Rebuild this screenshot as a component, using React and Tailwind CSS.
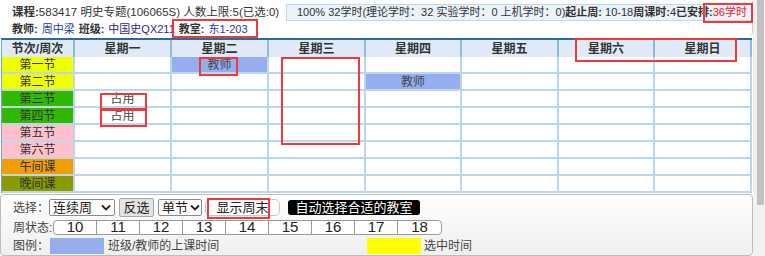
const FONT = { fontFamily: '"Liberation Sans", "Noto Sans CJK SC", sans-serif' };

const days = ["星期一", "星期二", "星期三", "星期四", "星期五", "星期六", "星期日"];

const periods = [
  { name: "第一节", bg: "bg-[#eeff00]" },
  { name: "第二节", bg: "bg-[#eeff00]" },
  { name: "第三节", bg: "bg-[#31b800]" },
  { name: "第四节", bg: "bg-[#31b800]" },
  { name: "第五节", bg: "bg-[#ffc0cb]" },
  { name: "第六节", bg: "bg-[#ffc0cb]" },
  { name: "午间课", bg: "bg-[#ef9f00]" },
  { name: "晚间课", bg: "bg-[#8a9a00]" },
];

const marks = {
  "0-1": { text: "教师", bg: "bg-[#94aef0]" },
  "1-3": { text: "教师", bg: "bg-[#94aef0]" },
  "2-0": { text: "占用", bg: "bg-white" },
  "3-0": { text: "占用", bg: "bg-white" },
};

const weeks = [10, 11, 12, 13, 14, 15, 16, 17, 18];

function Chevron() {
  return (
    <svg width="10" height="7" viewBox="0 0 10 7" className="ml-auto shrink-0">
      <path d="M1 1.5 L5 5.5 L9 1.5" fill="none" stroke="#222" strokeWidth="1.8" />
    </svg>
  );
}

function RedBox({ className }) {
  return <div className={`absolute border-2 border-[#f03a3a] pointer-events-none ${className}`} />;
}

function InfoPanel() {
  return (
    <div className="h-[36px] border-r border-[#cfcfcf] rounded-br-[5px] pl-[12px] text-[11px] text-[#333]">
      <div className="flex items-center h-[21px] pt-[2px]">
        <span className="text-[11.5px]">
          <b>课程:</b>583417 明史专题(106065S) 人数上限:5(已选:0)
        </span>
        <span className="ml-auto flex items-center h-[17px] w-[466px] pl-[10px] bg-[#eaf2fa] border border-[#c3d7ea] whitespace-nowrap">
          100% 32学时(理论学时：32 实验学时：0 上机学时：0)<b>起止周:</b>&nbsp;10-18<b>周课时:</b>4<b>已安排:</b>
          <span className="text-[#f02020]">36学时</span>
        </span>
      </div>
      <div className="flex items-center h-[15px] gap-[4px]">
        <b>教师:</b>
        <span className="text-[#1f3fa8]">周中梁</span>
        <b>班级:</b>
        <span className="text-[#3a1a8a]">中国史QX211</span>
        <b>教室:</b>
        <span className="text-[#1f3fa8]">东1-203</span>
      </div>
    </div>
  );
}

function Timetable() {
  const cols = "grid grid-cols-[71px_95px_95px_95px_94px_95px_94px_95px] gap-x-[2px]";
  return (
    <div className="ml-[1px] w-[751px] border-t-2 border-t-[#2a6aa0] border-l border-l-[#7aa6d2] text-[12px]">
      <div className={`${cols} h-[17px] pr-[2px] pb-[1px] bg-[#8fbbe0] font-bold text-[#333]`}>
        <div className="flex items-center justify-center bg-[#dfeaf6]">节次/周次</div>
        {days.map((d) => (
          <div key={d} className="flex items-center justify-center bg-[#dfeaf6]">
            {d}
          </div>
        ))}
      </div>
      <div className={`${cols} gap-y-[2px] pr-[2px] pb-[2px] bg-[#bcd6ee]`}>
        {periods.map((p, r) => [
          <div key={p.name} className={`flex items-center justify-center h-[15px] text-[#333] ${p.bg}`}>
            {p.name}
          </div>,
          ...days.map((d, c) => {
            const m = marks[`${r}-${c}`];
            return (
              <div
                key={p.name + d}
                className={`flex items-center justify-center h-[15px] text-[#444] ${m ? m.bg : "bg-white"}`}
              >
                {m ? m.text : ""}
              </div>
            );
          }),
        ])}
      </div>
    </div>
  );
}

function ControlPanel() {
  return (
    <div className="mt-[1px] w-[753px] h-[62px] border border-[#bdbdbd] rounded-[4px] bg-gradient-to-b from-white to-[#efefef] pl-[12px] pt-[3px] text-[12px] text-[#444] whitespace-nowrap">
      <div className="flex items-center h-[19px]">
        <span className="w-[36px]">选择：</span>
        <div className="flex items-center w-[66px] h-[17px] px-[3px] border border-[#8a8a8a] rounded-[2px] bg-white text-[13px] text-[#222]">
          连续周
          <Chevron />
        </div>
        <div className="ml-[4px] flex items-center justify-center w-[35px] h-[19px] border border-[#a8a8a8] rounded-[2px] bg-[#e4e4e4] text-[13px] text-[#222]">
          反选
        </div>
        <div className="ml-[4px] flex items-center gap-[2px] w-[44px] h-[17px] px-[3px] border border-[#8a8a8a] rounded-[2px] bg-white text-[13px] text-[#222]">
          单节
          <Chevron />
        </div>
        <div className="ml-[3px] flex items-center justify-center w-[75px] h-[17px] border border-[#c8c8c8] rounded-[5px] bg-white text-[13px] text-[#222]">
          显示周末
        </div>
        <div className="ml-[8px] flex items-center justify-center w-[132px] h-[15px] rounded-[3px] bg-black text-[13px] text-white">
          自动选择合适的教室
        </div>
      </div>
      <div className="flex items-center h-[19px] mt-[1px]">
        <span className="w-[40px]">周状态:</span>
        <div className="flex h-[15px] border border-[#9a9a9a] rounded-[4px] bg-white">
          {weeks.map((w, i) => (
            <div
              key={w}
              className={`flex items-center justify-center w-[43px] text-[15px] text-[#222] ${i < weeks.length - 1 ? "border-r border-[#9a9a9a]" : ""}`}
            >
              {w}
            </div>
          ))}
        </div>
      </div>
      <div className="flex items-center h-[17px]">
        <span className="w-[37px]">图例：</span>
        <div className="w-[54px] h-[16px] bg-[#94aef0]" />
        <span className="ml-[4px] w-[259px]">班级/教师的上课时间</span>
        <div className="w-[54px] h-[16px] bg-[#ffff00]" />
        <span className="ml-[3px]">选中时间</span>
      </div>
    </div>
  );
}

export default function App() {
  return (
    <div className="relative flex w-[765px] h-[256px] bg-white overflow-hidden" style={FONT}>
      <div className="w-[753px] pt-[1px]">
        <InfoPanel />
        <div className="h-[1px]" />
        <Timetable />
        <ControlPanel />
      </div>
      <div className="w-[12px] h-full bg-[#f1f1f1] pl-[4px]">
        <div className="w-[7px] h-[205px] bg-[#c1c1c1]" />
      </div>

      <RedBox className="left-[703px] top-[3px] w-[50px] h-[20px]" />
      <RedBox className="left-[172px] top-[19px] w-[86px] h-[19px]" />
      <RedBox className="left-[199px] top-[57px] w-[39px] h-[19px]" />
      <RedBox className="left-[281px] top-[57px] w-[79px] h-[88px]" />
      <RedBox className="left-[575px] top-[38px] w-[162px] h-[24px]" />
      <RedBox className="left-[100px] top-[93px] w-[47px] h-[17px]" />
      <RedBox className="left-[100px] top-[109px] w-[47px] h-[18px]" />
      <RedBox className="left-[207px] top-[198px] w-[63px] h-[21px]" />
    </div>
  );
}
